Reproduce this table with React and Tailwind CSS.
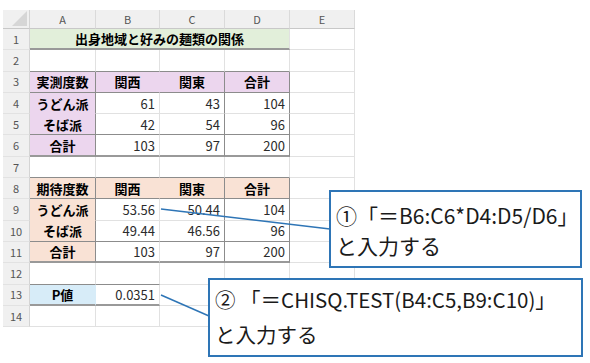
import React from "react";

const R = {
  g: "border-r border-r-[#e1e1e1]",
  d: "border-r border-r-[#8c8c8c]",
  f: "border-r border-r-transparent",
};
const B = {
  g: "border-b border-b-[#e1e1e1]",
  d: "border-b border-b-[#8c8c8c]",
  d2: "border-b-2 border-b-[#999999]",
  f: "border-b border-b-transparent",
};
const FILL = {
  w: "bg-white",
  p: "bg-[#ecd6ee]",
  o: "bg-[#f9e2d5]",
  b: "bg-[#d7ecf8]",
  gr: "bg-[#e2efda]",
};

function Cell({ t = "", r = "g", b = "g", fill = "w", bold = false, align = "right", span = "" }) {
  const al = align === "center" ? "justify-center" : align === "left" ? "justify-start" : "justify-end";
  return (
    <div
      className={`${R[r]} ${B[b]} ${FILL[fill]} ${span} flex items-center ${al} px-[4px] text-[13px] leading-none whitespace-nowrap ${
        bold ? "font-bold text-black" : "text-[#2b2b2b]"
      }`}
    >
      {t}
    </div>
  );
}

function RowHead({ n }) {
  return (
    <div className="bg-[#f0f0f0] border-r border-r-[#d4d4d4] border-b border-b-[#e2e2e2] flex items-center justify-center text-[11px] text-[#555555]">
      {n}
    </div>
  );
}

function ColHead({ t }) {
  return (
    <div className="bg-[#f0f0f0] border-r border-r-[#dadada] border-b border-b-[#c8c8c8] flex items-center justify-center text-[11px] text-[#555555]">
      {t}
    </div>
  );
}

function TableRows({ start, fill, head, rows }) {
  return (
    <>
      <RowHead n={start} />
      <Cell t={head} fill={fill} bold align="center" r="d" b="d" />
      <Cell t="関西" fill={fill} bold align="center" r="f" b="d" />
      <Cell t="関東" fill={fill} bold align="center" r="d" b="d" />
      <Cell t="合計" fill={fill} bold align="center" r="d" b="d" />
      <Cell />
      <RowHead n={start + 1} />
      <Cell t="うどん派" fill={fill} bold align="center" r="d" b="f" />
      <Cell t={rows[0][0]} r="g" b="g" />
      <Cell t={rows[0][1]} r="d" b="g" />
      <Cell t={rows[0][2]} r="d" b="g" />
      <Cell />
      <RowHead n={start + 2} />
      <Cell t="そば派" fill={fill} bold align="center" r="d" b="d" />
      <Cell t={rows[1][0]} r="g" b="d" />
      <Cell t={rows[1][1]} r="d" b="d" />
      <Cell t={rows[1][2]} r="d" b="d" />
      <Cell />
      <RowHead n={start + 3} />
      <Cell t="合計" fill={fill} bold align="center" r="d" b="d2" />
      <Cell t={rows[2][0]} r="g" b="d2" />
      <Cell t={rows[2][1]} r="d" b="d2" />
      <Cell t={rows[2][2]} r="d" b="d2" />
      <Cell />
    </>
  );
}

export default function App() {
  return (
    <div
      className="relative w-[590px] h-[363px] bg-white overflow-hidden"
      style={{ fontFamily: '"Noto Sans CJK JP", "Noto Sans", sans-serif' }}
    >
      <div className="ml-[3px] mt-[10px] w-[352px] grid grid-cols-[27px_66px_64px_65px_65px_65px] grid-rows-[19px_repeat(14,21.3px)]">
        {/* header row */}
        <div className="bg-[#f0f0f0] border-r border-r-[#d4d4d4] border-b border-b-[#c8c8c8] flex items-end justify-end p-[2px]">
          <svg width="15" height="15" viewBox="0 0 15 15">
            <polygon points="15,0 15,15 0,15" fill="#d6d6d6" />
          </svg>
        </div>
        <ColHead t="A" />
        <ColHead t="B" />
        <ColHead t="C" />
        <ColHead t="D" />
        <ColHead t="E" />

        {/* row 1 */}
        <RowHead n={1} />
        <Cell t="出身地域と好みの麺類の関係" fill="gr" bold align="center" r="g" b="d2" span="col-span-4 text-[13.5px]" />
        <Cell />

        {/* row 2 */}
        <RowHead n={2} />
        <Cell b="d" />
        <Cell b="d" />
        <Cell b="d" />
        <Cell b="d" />
        <Cell />

        <TableRows
          start={3}
          fill="p"
          head="実測度数"
          rows={[
            ["61", "43", "104"],
            ["42", "54", "96"],
            ["103", "97", "200"],
          ]}
        />

        {/* row 7 */}
        <RowHead n={7} />
        <Cell b="d" />
        <Cell b="d" />
        <Cell b="d" />
        <Cell b="d" />
        <Cell />

        <TableRows
          start={8}
          fill="o"
          head="期待度数"
          rows={[
            ["53.56", "50.44", "104"],
            ["49.44", "46.56", "96"],
            ["103", "97", "200"],
          ]}
        />

        {/* row 12 */}
        <RowHead n={12} />
        <Cell b="d" />
        <Cell b="d" />
        <Cell />
        <Cell />
        <Cell />

        {/* row 13 */}
        <RowHead n={13} />
        <Cell t="P値" fill="b" bold align="center" r="f" b="d2" />
        <Cell t="0.0351" r="g" b="d2" />
        <Cell />
        <Cell />
        <Cell />

        {/* row 14 */}
        <RowHead n={14} />
        <Cell />
        <Cell />
        <Cell />
        <Cell />
        <Cell />
      </div>

      {/* leader lines */}
      <svg className="absolute left-0 top-0 pointer-events-none" width="590" height="363" viewBox="0 0 590 363">
        <line x1="161" y1="209" x2="330" y2="229" stroke="#2e75b6" strokeWidth="1.5" />
        <line x1="161" y1="295" x2="209" y2="316" stroke="#2e75b6" strokeWidth="1.5" />
      </svg>

      {/* callout 1 */}
      <div className="absolute left-[329px] top-[190px] w-[253px] h-[78px] border-2 border-[#2e75b6] bg-white pl-[5px] pt-[8px] text-[21px] leading-[30px] text-[#1a1a1a] whitespace-nowrap">
        <div>①「＝B6:C6*D4:D5/D6」</div>
        <div>と入力する</div>
      </div>

      {/* callout 2 */}
      <div className="absolute left-[208px] top-[278px] w-[375px] h-[79px] border-2 border-[#2e75b6] bg-white pl-[5px] pt-[2px] text-[20.5px] leading-[35px] text-[#1a1a1a] whitespace-nowrap">
        <div>② 「＝CHISQ.TEST(B4:C5,B9:C10)」</div>
        <div>と入力する</div>
      </div>
    </div>
  );
}
